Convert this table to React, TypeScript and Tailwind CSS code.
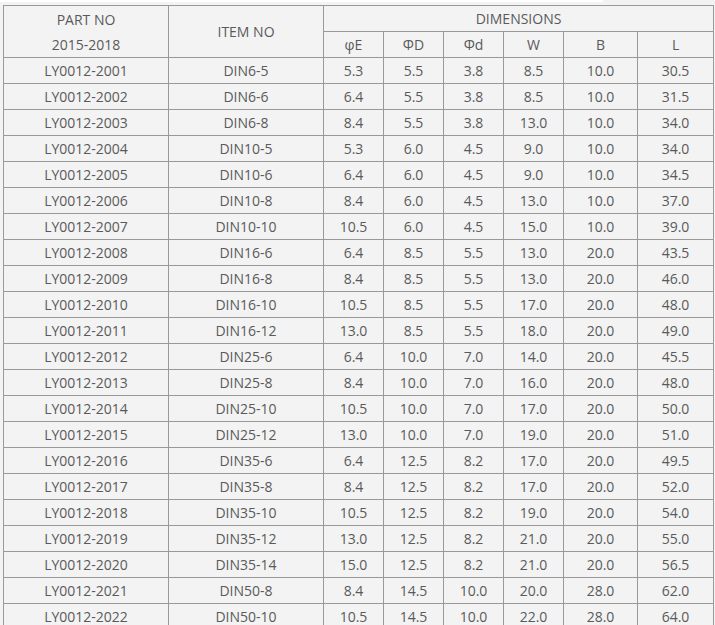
const rows: string[][] = [
  ["LY0012-2001", "DIN6-5", "5.3", "5.5", "3.8", "8.5", "10.0", "30.5"],
  ["LY0012-2002", "DIN6-6", "6.4", "5.5", "3.8", "8.5", "10.0", "31.5"],
  ["LY0012-2003", "DIN6-8", "8.4", "5.5", "3.8", "13.0", "10.0", "34.0"],
  ["LY0012-2004", "DIN10-5", "5.3", "6.0", "4.5", "9.0", "10.0", "34.0"],
  ["LY0012-2005", "DIN10-6", "6.4", "6.0", "4.5", "9.0", "10.0", "34.5"],
  ["LY0012-2006", "DIN10-8", "8.4", "6.0", "4.5", "13.0", "10.0", "37.0"],
  ["LY0012-2007", "DIN10-10", "10.5", "6.0", "4.5", "15.0", "10.0", "39.0"],
  ["LY0012-2008", "DIN16-6", "6.4", "8.5", "5.5", "13.0", "20.0", "43.5"],
  ["LY0012-2009", "DIN16-8", "8.4", "8.5", "5.5", "13.0", "20.0", "46.0"],
  ["LY0012-2010", "DIN16-10", "10.5", "8.5", "5.5", "17.0", "20.0", "48.0"],
  ["LY0012-2011", "DIN16-12", "13.0", "8.5", "5.5", "18.0", "20.0", "49.0"],
  ["LY0012-2012", "DIN25-6", "6.4", "10.0", "7.0", "14.0", "20.0", "45.5"],
  ["LY0012-2013", "DIN25-8", "8.4", "10.0", "7.0", "16.0", "20.0", "48.0"],
  ["LY0012-2014", "DIN25-10", "10.5", "10.0", "7.0", "17.0", "20.0", "50.0"],
  ["LY0012-2015", "DIN25-12", "13.0", "10.0", "7.0", "19.0", "20.0", "51.0"],
  ["LY0012-2016", "DIN35-6", "6.4", "12.5", "8.2", "17.0", "20.0", "49.5"],
  ["LY0012-2017", "DIN35-8", "8.4", "12.5", "8.2", "17.0", "20.0", "52.0"],
  ["LY0012-2018", "DIN35-10", "10.5", "12.5", "8.2", "19.0", "20.0", "54.0"],
  ["LY0012-2019", "DIN35-12", "13.0", "12.5", "8.2", "21.0", "20.0", "55.0"],
  ["LY0012-2020", "DIN35-14", "15.0", "12.5", "8.2", "21.0", "20.0", "56.5"],
  ["LY0012-2021", "DIN50-8", "8.4", "14.5", "10.0", "20.0", "28.0", "62.0"],
  ["LY0012-2022", "DIN50-10", "10.5", "14.5", "10.0", "22.0", "28.0", "64.0"],
];

const cell = "border border-[#999] h-[26px] p-0 text-center align-middle";

export default function App() {
  return (
    <div
      className="h-[625px] w-[715px] overflow-hidden bg-[#f3f3f3] text-[14px] text-[#5a5a5a]"
      style={{ fontFamily: '"Open Sans", "Liberation Sans", sans-serif' }}
    >
      <div className="h-[2px] w-[603px] bg-white" />
      <div className="pl-[3px] pt-[3px]">
        <table className="w-[710px] table-fixed border-collapse">
          <colgroup>
            <col className="w-[165px]" />
            <col className="w-[155px]" />
            <col className="w-[60px]" />
            <col className="w-[60px]" />
            <col className="w-[60px]" />
            <col className="w-[60px]" />
            <col className="w-[74px]" />
            <col className="w-[76px]" />
          </colgroup>
          <thead>
            <tr>
              <th rowSpan={2} className={`${cell} font-normal leading-[25px]`}>
                PART NO
                <br />
                2015-2018
              </th>
              <th rowSpan={2} className={`${cell} font-normal`}>ITEM NO</th>
              <th colSpan={6} className={`${cell} font-normal`}>DIMENSIONS</th>
            </tr>
            <tr>
              {["φE", "ΦD", "Φd", "W", "B", "L"].map((h) => (
                <th key={h} className={`${cell} font-normal`}>{h}</th>
              ))}
            </tr>
          </thead>
          <tbody>
            {rows.map((r) => (
              <tr key={r[0]}>
                {r.map((v, i) => (
                  <td key={i} className={cell}>{v}</td>
                ))}
              </tr>
            ))}
          </tbody>
        </table>
      </div>
    </div>
  );
}
